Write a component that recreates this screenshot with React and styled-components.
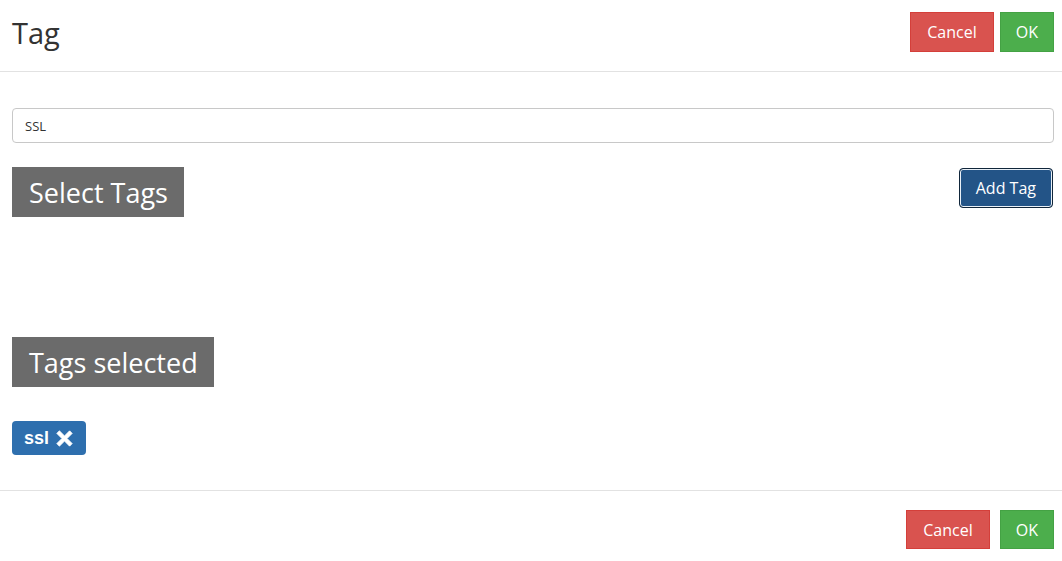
import React from "react";
import styled, { createGlobalStyle } from "styled-components";

const Global = createGlobalStyle`
  html, body { margin: 0; padding: 0; background: #fff; }
  body { font-family: "Open Sans", "Liberation Sans", sans-serif; color: #333; }
  * { box-sizing: border-box; }
`;

const Page = styled.div`
  width: 1062px;
  height: 561px;
  display: flex;
  flex-direction: column;
`;

const Header = styled.div`
  height: 72px;
  display: flex;
  align-items: flex-start;
  justify-content: space-between;
  padding: 12px 8px 0 12px;
  border-bottom: 1px solid #e2e2e2;
`;

const Title = styled.h1`
  margin: 0;
  font-size: 29px;
  font-weight: 400;
  line-height: 42px;
  color: #333;
`;

const Actions = styled.div`
  display: flex;
  gap: ${(p) => p.$gap}px;
`;

const Btn = styled.button`
  height: ${(p) => p.$h || 40}px;
  padding: 0 ${(p) => p.$px || 16}px;
  font-family: "Open Sans", sans-serif;
  font-size: 16px;
  color: #fff;
  border-radius: 0;
  cursor: pointer;
  background: ${(p) => (p.$variant === "danger" ? "#d9534f" : "#4cae4c")};
  border: 1px solid ${(p) => (p.$variant === "danger" ? "#d43f3a" : "#44a244")};
`;

const Body = styled.div`
  flex: 1;
  padding: 36px 8px 0 12px;
  display: flex;
  flex-direction: column;
`;

const Input = styled.input`
  width: 100%;
  height: 35px;
  border: 1px solid #c8c8c8;
  border-radius: 4px;
  padding: 0 12px;
  font-family: "Open Sans", sans-serif;
  font-size: 13px;
  color: #333;
  outline: none;
`;

const SelectRow = styled.div`
  margin-top: 24px;
  display: flex;
  justify-content: space-between;
  align-items: flex-start;
`;

const SectionLabel = styled.div`
  display: inline-flex;
  align-items: center;
  height: 50px;
  padding: 0 16px 0 17px;
  background: #6b6b6b;
  color: #fff;
  font-size: 27px;
  align-self: flex-start;
  margin-top: ${(p) => p.$mt || 0}px;
`;

const AddTag = styled.button`
  margin-top: 1px;
  margin-right: 1px;
  height: 40px;
  padding: 0 16px;
  font-family: "Open Sans", sans-serif;
  font-size: 16px;
  color: #fff;
  background: #235487;
  border: 1px solid #11263a;
  border-radius: 4px;
  box-shadow: inset 0 0 0 1px #e9f0f7;
  cursor: pointer;
`;

const Badge = styled.span`
  margin-top: 34px;
  align-self: flex-start;
  display: inline-flex;
  align-items: center;
  gap: 7px;
  height: 34px;
  padding: 0 13px 0 12px;
  background: #2e6fae;
  color: #fff;
  border-radius: 4px;
  font-family: "Liberation Sans", Arial, sans-serif;
  font-weight: 700;
  font-size: 18px;
`;

const Footer = styled.div`
  height: 71px;
  border-top: 1px solid #e2e2e2;
  display: flex;
  justify-content: flex-end;
  align-items: flex-start;
  padding: 19px 8px 0 0;
`;

const XIcon = () => (
  <svg width="17" height="17" viewBox="0 0 16 16" aria-hidden="true">
    <path
      d="M3.2 0.8 L8 5.6 L12.8 0.8 L15.2 3.2 L10.4 8 L15.2 12.8 L12.8 15.2 L8 10.4 L3.2 15.2 L0.8 12.8 L5.6 8 L0.8 3.2 Z"
      fill="#fff"
      stroke="#fff"
      strokeWidth="0.8"
      strokeLinejoin="round"
    />
  </svg>
);

export default function App() {
  return (
    <>
      <Global />
      <Page>
        <Header>
          <Title>Tag</Title>
          <Actions $gap={6}>
            <Btn $variant="danger">Cancel</Btn>
            <Btn $variant="success" $px={15}>OK</Btn>
          </Actions>
        </Header>
        <Body>
          <Input defaultValue="SSL" />
          <SelectRow>
            <SectionLabel>Select Tags</SectionLabel>
            <AddTag>Add Tag</AddTag>
          </SelectRow>
          <SectionLabel $mt={120}>Tags selected</SectionLabel>
          <Badge>
            ssl <XIcon />
          </Badge>
        </Body>
        <Footer>
          <Actions $gap={10}>
            <Btn $variant="danger" $h={39}>Cancel</Btn>
            <Btn $variant="success" $h={39} $px={15}>OK</Btn>
          </Actions>
        </Footer>
      </Page>
    </>
  );
}
